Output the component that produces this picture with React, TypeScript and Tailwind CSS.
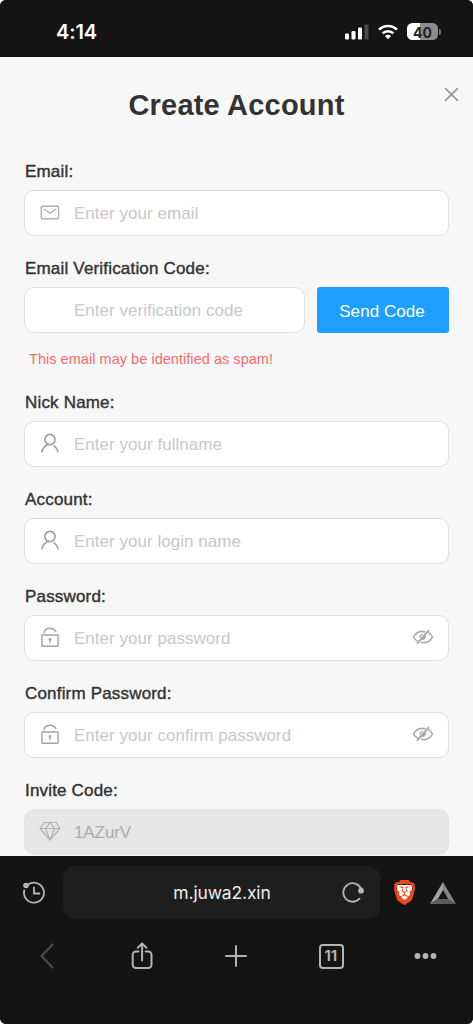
import type { ReactNode } from "react";
import { SiBrave } from "react-icons/si";

type Field = {
  id: string;
  label: string;
  placeholder: string;
  icon: ReactNode;
  secret?: boolean;
};

const accountFields: Field[] = [
  { id: "nickname", label: "Nick Name:", placeholder: "Enter your fullname", icon: <UserIcon /> },
  { id: "account", label: "Account:", placeholder: "Enter your login name", icon: <UserIcon /> },
  { id: "password", label: "Password:", placeholder: "Enter your password", icon: <LockIcon />, secret: true },
  { id: "confirm", label: "Confirm Password:", placeholder: "Enter your confirm password", icon: <LockIcon />, secret: true },
];

function MailIcon() {
  return (
    <svg viewBox="0 0 20 20" className="size-5" fill="none" stroke="#b0b0b0" strokeWidth="1.4">
      <rect x="1.2" y="4.2" width="17.4" height="12.6" rx="1.2" />
      <path d="M4.3 7.200 10 11.300l5.700-4.100" strokeLinecap="round" strokeLinejoin="round" />
    </svg>
  );
}

function UserIcon() {
  return (
    <svg viewBox="0 0 20 20" className="size-5" fill="none" stroke="#9f9f9f" strokeWidth="1.6" strokeLinecap="round">
      <circle cx="10" cy="6.5" r="5.100" />
      <path d="M8.200 11.400C4.800 12.400 2.600 15.200 2 18.800M14 12.900c2 1.300 3.400 3.200 3.900 5.800" />
    </svg>
  );
}

function LockIcon() {
  return (
    <svg viewBox="0 0 20 20" className="size-5" fill="none" stroke="#a3a3a3" strokeWidth="1.4">
      <rect x="1.900" y="8" width="16.200" height="11.200" rx="0.600" />
      <path d="M3.800 5.700C4.600 3 7 1.300 10 1.300c2.700 0 4.900 1.400 5.900 3.400" strokeLinecap="round" />
      <path d="M10 13v3.200" strokeWidth="1.200" />
      <circle cx="10" cy="12.400" r="1.400" fill="#a3a3a3" stroke="none" />
    </svg>
  );
}

function EyeOffIcon() {
  return (
    <svg viewBox="0 0 22 16" className="h-4 w-[22px]" fill="none" stroke="#a9a9a9" strokeWidth="1.600" strokeLinecap="round">
      <path d="M13 2.700C8.200 1.700 3.700 3.800 1.500 8c.9 1.800 2.300 3.100 4 3.900M16.800 3.900c1.600.9 2.900 2.200 3.700 4.100-2.200 4.200-6.600 6.200-11.100 5.300" />
      <path d="M16.500 1.700 5.300 14.300" strokeWidth="1.800" />
      <path d="M12.800 5.600c1.600 1.300 1.600 4.200-1.200 5.200-.9.300-1.900.2-2.700-.3" fill="#a9a9a9" stroke="none" />
      <path d="M8.200 8.700c-.2-1.600.8-3 2.300-3.300" strokeWidth="1.200" />
    </svg>
  );
}

function GemIcon() {
  return (
    <svg viewBox="0 0 22 20" className="h-5 w-[22px]" fill="none" stroke="#b3b3b3" strokeWidth="1.200" strokeLinejoin="round">
      <path d="M5 1.500h12l4 6L11 19 1 7.500z" />
      <path d="M1 7.500h20M6.500 7.500 11 19l4.500-11.500M6.500 7.500l4.500-6 4.500 6" />
    </svg>
  );
}

function StatusBar() {
  return (
    <header className="flex h-[57px] items-center justify-between bg-[#141414] pt-[6px] pr-8 pl-14">
      <span className="pt-px font-['Inter',sans-serif] text-[20px] font-semibold tracking-[-0.100px] text-white">4:14</span>
      <div className="flex items-center">
        <svg viewBox="0 0 24 16" className="h-4 w-6">
          <rect x="0" y="9.500" width="4" height="6" rx="1.200" fill="#fff" />
          <rect x="6.500" y="7" width="4" height="8.500" rx="1.200" fill="#fff" />
          <rect x="13" y="3.500" width="4" height="12" rx="1.200" fill="#fff" />
          <rect x="19.500" y="0.500" width="4" height="15" rx="1.200" fill="#4b4b4b" />
        </svg>
        <svg viewBox="0 0 20 16" className="ml-[9px] h-4 w-5" fill="none" stroke="#fff" strokeWidth="2.500">
          <path d="M1 5.700a12.800 12.800 0 0 1 18 0" />
          <path d="M4.500 9.400a7.800 7.800 0 0 1 11 0" />
          <path d="M10 15.300 6.900 12.100a4.400 4.400 0 0 1 6.200 0z" fill="#fff" stroke="none" />
        </svg>
        <div className="ml-[9px] flex items-center gap-px">
          <div className="flex h-[17px] w-[31px] items-center justify-center rounded-[5.500px] bg-[linear-gradient(90deg,#fff_41%,#8c8c8c_41%)] pt-[2px] font-['Inter',sans-serif] text-[14px] leading-none font-bold text-[#222]">
            40
          </div>
          <div className="h-[6px] w-[2px] rounded-r-full bg-[#777]" />
        </div>
      </div>
    </header>
  );
}

function Label({ htmlFor, children }: { htmlFor: string; children: ReactNode }) {
  return (
    <label
      htmlFor={htmlFor}
      className="flex h-5 items-center pt-[2px] pl-px text-[17px] tracking-[0.180px] whitespace-nowrap text-[#333] [-webkit-text-stroke:0.400px_#333]"
    >
      {children}
    </label>
  );
}

function TextBox({ id, placeholder, icon, secret }: Omit<Field, "label">) {
  return (
    <div className="flex h-[46px] min-w-0 flex-1 items-center rounded-[10px] border border-[#dfdfdf] bg-white px-[14px]">
      <div className="-mt-0.5 flex w-[22px] justify-center">{icon}</div>
      <input
        id={id}
        type={secret ? "password" : "text"}
        placeholder={placeholder}
        className="ml-[13px] w-0 flex-1 bg-transparent pt-[2px] text-[17px] tracking-[0.030px] outline-none placeholder:text-[#c8c8c8]"
      />
      {secret && (
        <button type="button" aria-label="Show password" className="-mt-0.5">
          <EyeOffIcon />
        </button>
      )}
    </div>
  );
}

function SignupForm() {
  return (
    <main className="relative h-[799px] overflow-hidden bg-[#f7f7f7] px-6">
      <button type="button" aria-label="Close" className="absolute top-[30px] right-[14px]">
        <svg viewBox="0 0 14 14" className="size-[15px]" stroke="#999" strokeWidth="1.600">
          <path d="M1 1l12 12M13 1 1 13" />
        </svg>
      </button>
      <h1 className="pt-[30px] text-center text-[29px] leading-9 font-bold tracking-[0.200px] text-[#333]">
        Create Account
      </h1>

      <form className="mt-[38px]">
        <Label htmlFor="email">Email:</Label>
        <div className="mt-[9px] flex">
          <TextBox id="email" placeholder="Enter your email" icon={<MailIcon />} />
        </div>

        <div className="mt-[22px]">
          <Label htmlFor="code">Email Verification Code:</Label>
          <div className="mt-[9px] flex gap-3">
            <TextBox id="code" placeholder="Enter verification code" icon={null} />
            <button type="button" className="h-[46px] w-[132px] rounded-[3px] bg-[#1e9fff] pt-[4px] pr-[2px] text-[17px] tracking-[0.050px] text-white">
              Send Code
            </button>
          </div>
          <p className="mt-4 mb-[23px] pl-[5px] text-[14.500px] leading-5 tracking-[0.040px] text-[#f56c6c]">
            This email may be identified as spam!
          </p>
        </div>

        {accountFields.map(({ label, ...field }) => (
          <div key={field.id} className="mb-[22px]">
            <Label htmlFor={field.id}>{label}</Label>
            <div className="mt-[9px] flex">
              <TextBox {...field} />
            </div>
          </div>
        ))}

        <Label htmlFor="invite">Invite Code:</Label>
        <div id="invite" className="mt-[9px] flex h-[46px] items-center rounded-[10px] bg-[#e6e6e6] pl-[15px]">
          <div className="-mt-0.5">
            <GemIcon />
          </div>
          <span className="ml-[13px] pt-[2px] text-[17px] tracking-[-0.100px] text-[#aaa]">1AZurV</span>
        </div>
      </form>
    </main>
  );
}

function BrowserBar() {
  return (
    <footer className="h-[168px] bg-[#141414]">
      <div className="flex items-center pt-[10px]">
        <svg viewBox="0 0 24 24" className="ml-[22px] size-6" fill="none" stroke="#b4b4b4" strokeWidth="1.800" strokeLinecap="round">
          <path d="M5.800 3.800A10 10 0 1 1 2.200 9.500" />
          <circle cx="4" cy="4.500" r="2.800" fill="#b4b4b4" stroke="none" />
          <path d="M12 6.500v6h5.500" />
        </svg>
        <div className="ml-[17px] flex h-[53px] w-[317px] items-center rounded-[12px] bg-[#1e1e1e] pr-4">
          <span className="flex-1 pt-px pl-[39px] text-center font-['Inter',sans-serif] text-[17.500px] tracking-[-0.150px] text-[#ededed]">
            m.juwa2.xin
          </span>
          <svg viewBox="0 0 22 22" className="size-[22px]" fill="none" stroke="#b4b4b4" strokeWidth="1.800" strokeLinecap="round">
            <path d="M17.500 16.700A9.300 9.300 0 1 1 19 6.500" />
            <circle cx="19" cy="8.700" r="2.900" fill="#b4b4b4" stroke="none" />
          </svg>
        </div>
        <div className="relative ml-3 flex size-[25px] items-center justify-center">
          <div className="absolute h-[16px] w-[15px] rounded-b-[7px] bg-white" />
          <SiBrave className="relative size-[25px] text-[#ea4a1c]" />
        </div>
        <svg viewBox="0 0 26 22" className="ml-[13px] h-[22px] w-[26px]">
          <path d="M13 0 0 22l7.800-5L13 8z" fill="#a5a5a5" />
          <path d="M13 0 26 22l-7.800-5L13 8z" fill="#858585" />
          <path d="M0 22l7.800-5h10.400L26 22z" fill="#5b5b5f" />
        </svg>
      </div>

      <nav className="mt-[23px] flex h-7 items-center justify-around text-[#b4b4b4]">
        <svg viewBox="0 0 28 28" className="size-7" fill="none" stroke="#4a4a4d" strokeWidth="2.200" strokeLinecap="round" strokeLinejoin="round">
          <path d="M19.500 2.500 8.500 14 19.500 25.500" />
        </svg>
        <svg viewBox="0 0 28 28" className="size-7" fill="none" stroke="currentColor" strokeWidth="2" strokeLinecap="round" strokeLinejoin="round">
          <path d="M10.500 9.500H8A3.300 3.300 0 0 0 4.700 12.800v10A3.300 3.300 0 0 0 8 26.100h12.200a3.300 3.300 0 0 0 3.300-3.300v-10a3.300 3.300 0 0 0-3.300-3.300h-2.500" />
          <path d="M14.100 18.500V1.500M9.800 5.700l4.300-4.300 4.300 4.300" />
        </svg>
        <svg viewBox="0 0 28 28" className="size-7" stroke="currentColor" strokeWidth="2" strokeLinecap="round">
          <path d="M14 4v20M4 14h20" />
        </svg>
        <div className="flex size-[28px] items-center justify-center">
          <div className="flex size-[25px] items-center justify-center rounded-[4px] border-2 border-current font-['Inter',sans-serif] text-[14px] leading-none font-bold tracking-[0.300px]">
            11
          </div>
        </div>
        <svg viewBox="0 0 28 28" className="size-7" fill="currentColor">
          <circle cx="5.500" cy="14" r="2.900" />
          <circle cx="13.500" cy="14" r="2.900" />
          <circle cx="21.500" cy="14" r="2.900" />
        </svg>
      </nav>
    </footer>
  );
}

export default function App() {
  return (
    <div className="h-[1024px] w-[473px] overflow-hidden rounded-[6px] bg-[#141414] font-['Liberation_Sans',Arial,sans-serif]">
      <StatusBar />
      <SignupForm />
      <BrowserBar />
    </div>
  );
}
